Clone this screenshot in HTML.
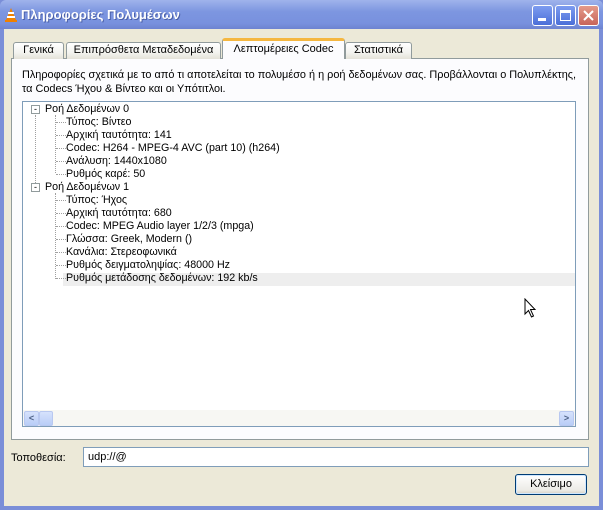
<!DOCTYPE html>
<html><head><meta charset="utf-8"><style>
*{margin:0;padding:0;box-sizing:border-box}
body{width:603px;height:510px;overflow:hidden;background:#7a8ed8;font-family:"Liberation Sans","DejaVu Sans",sans-serif;font-size:11px;color:#000;position:relative}
.title{position:absolute;left:0;top:0;width:603px;height:29px;background:linear-gradient(#9fb3ec,#7d96e0 40%,#7891de 80%,#6d83d0);border-radius:6px 6px 0 0}
.title span{position:absolute;left:21px;top:7px;color:#fff;font-size:13px;font-weight:bold;text-shadow:1px 1px #4a5fa8}
.tb{position:absolute;top:5px;width:21px;height:21px;border:1px solid #fff;border-radius:3px;background:linear-gradient(#7d9cf0,#4b6fd8)}
.body{position:absolute;left:4px;top:29px;width:595px;height:477px;background:#ece9d8}
.tab{position:absolute;top:42px;height:17px;border:1px solid #919b9c;border-bottom:none;background:linear-gradient(#fff,#f3f3ef 60%,#e4e2d8);border-radius:3px 3px 0 0;text-align:center;line-height:15px}
.panel{position:absolute;left:11px;top:58px;width:578px;height:382px;border:1px solid #919b9c;background:#fcfcfe}
.tree{position:absolute;left:22px;top:101px;width:554px;height:326px;border:1px solid #7f9db9;background:#fff;overflow:hidden;font-size:10.7px}
.in{position:absolute;left:0;top:1px;width:552px;height:300px}
.row{position:absolute;height:13px;line-height:13px;white-space:nowrap}
.pm{position:absolute;width:9px;height:9px;border:1px solid #919b9c;background:#fff;font-size:9px;line-height:6px;text-align:center}
.dot{position:absolute;border-left:1px dotted #a0a0a0}
.doth{position:absolute;border-top:1px dotted #a0a0a0;width:10px}
.sb{position:absolute;left:0;top:308px;width:552px;height:16px;background:#f7f7f3}
.sbb{position:absolute;top:1px;width:15px;height:15px;border:1px solid #b8c8f0;border-radius:2px;background:linear-gradient(#d6e2fc,#b9cdf7);color:#4d6185;font-size:9px;text-align:center;line-height:13px;font-weight:bold}
</style></head><body>
<div class="title"><svg style="position:absolute;left:5px;top:8px" width="12" height="14"><polygon points="6,0 11,12 1,12" fill="#f08000"/><rect x="3" y="4" width="6" height="2" fill="#fff"/><rect x="2" y="8" width="8" height="2" fill="#fff"/><rect x="0" y="12" width="12" height="2" fill="#f08000"/></svg><span>Πληροφορίες Πολυμέσων</span>
<div class="tb" style="left:532px"><div style="position:absolute;left:5px;top:12px;width:8px;height:3px;background:#fff"></div></div>
<div class="tb" style="left:555px"><div style="position:absolute;left:4px;top:4px;width:11px;height:11px;border:1px solid #fff;border-top:3px solid #fff"></div></div>
<div class="tb" style="left:578px;background:linear-gradient(#e59a8a,#c8655a)"><svg width="19" height="19"><path d="M5 5L14 14M14 5L5 14" stroke="#fff" stroke-width="2"/></svg></div>
</div>
<div class="body"></div>
<div class="panel"></div>
<div class="tab" style="left:13px;width:51px">Γενικά</div>
<div class="tab" style="left:66px;width:155px">Επιπρόσθετα Μεταδεδομένα</div>
<div class="tab" style="left:345px;width:67px">Στατιστικά</div>
<div class="tab" style="left:222px;top:38px;width:123px;height:21px;background:#fcfcfe;border-top:3px solid #f5b740;line-height:16px">Λεπτομέρειες Codec</div>
<div style="position:absolute;left:22px;top:68px;width:580px;line-height:14px;font-size:10.9px;white-space:nowrap">Πληροφορίες σχετικά με το από τι αποτελείται το πολυμέσο ή η ροή δεδομένων σας. Προβάλλονται ο Πολυπλέκτης,<br>τα Codecs Ήχου &amp; Βίντεο και οι Υπότιτλοι.</div>
<div class="tree"><div class="in">
<div style="position:absolute;left:40px;top:170px;width:514px;height:13px;background:#eeeeee"></div>
<div class="dot" style="left:12px;top:12px;height:72px"></div>
<div class="dot" style="left:32px;top:12px;height:58px"></div>
<div class="dot" style="left:32px;top:90px;height:86px"></div>
<div class="pm" style="left:8px;top:2px">-</div>
<div class="row" style="left:22px;top:0">Ροή Δεδομένων 0</div>
<div class="doth" style="left:33px;top:19px"></div><div class="row" style="left:43px;top:13px">Τύπος: Βίντεο</div>
<div class="doth" style="left:33px;top:32px"></div><div class="row" style="left:43px;top:26px">Αρχική ταυτότητα: 141</div>
<div class="doth" style="left:33px;top:45px"></div><div class="row" style="left:43px;top:39px">Codec: H264 - MPEG-4 AVC (part 10) (h264)</div>
<div class="doth" style="left:33px;top:58px"></div><div class="row" style="left:43px;top:52px">Ανάλυση: 1440x1080</div>
<div class="doth" style="left:33px;top:71px"></div><div class="row" style="left:43px;top:65px">Ρυθμός καρέ: 50</div>
<div class="pm" style="left:8px;top:80px">-</div>
<div class="row" style="left:22px;top:78px">Ροή Δεδομένων 1</div>
<div class="doth" style="left:33px;top:97px"></div><div class="row" style="left:43px;top:91px">Τύπος: Ήχος</div>
<div class="doth" style="left:33px;top:110px"></div><div class="row" style="left:43px;top:104px">Αρχική ταυτότητα: 680</div>
<div class="doth" style="left:33px;top:123px"></div><div class="row" style="left:43px;top:117px">Codec: MPEG Audio layer 1/2/3 (mpga)</div>
<div class="doth" style="left:33px;top:136px"></div><div class="row" style="left:43px;top:130px">Γλώσσα: Greek, Modern ()</div>
<div class="doth" style="left:33px;top:149px"></div><div class="row" style="left:43px;top:143px">Κανάλια: Στερεοφωνικά</div>
<div class="doth" style="left:33px;top:162px"></div><div class="row" style="left:43px;top:156px">Ρυθμός δειγματοληψίας: 48000 Hz</div>
<div class="doth" style="left:33px;top:175px"></div><div class="row" style="left:43px;top:169px">Ρυθμός μετάδοσης δεδομένων: 192 kb/s</div>
</div>
<div class="sb"><div class="sbb" style="left:1px">&lt;</div><div class="sbb" style="left:16px;width:14px"></div><div class="sbb" style="left:536px">&gt;</div></div>
</div>
<svg style="position:absolute;left:524px;top:298px" width="13" height="21"><path d="M1 1V16L4.5 12.5L7.5 19L9.5 18L6.5 11.5H11Z" fill="#fff" stroke="#000"/></svg>
<div style="position:absolute;left:11px;top:452px">Τοποθεσία:</div>
<div style="position:absolute;left:83px;top:447px;width:506px;height:20px;border:1px solid #7f9db9;background:#fff;padding:3px 4px">udp://@</div>
<div style="position:absolute;left:515px;top:474px;width:72px;height:21px;border:1px solid #003c74;border-radius:3px;background:linear-gradient(#fff,#ecebe6 80%,#d6d0c5);text-align:center;line-height:19px;box-shadow:inset 0 0 0 1px #cee7ff">Κλείσιμο</div>
</body></html>
